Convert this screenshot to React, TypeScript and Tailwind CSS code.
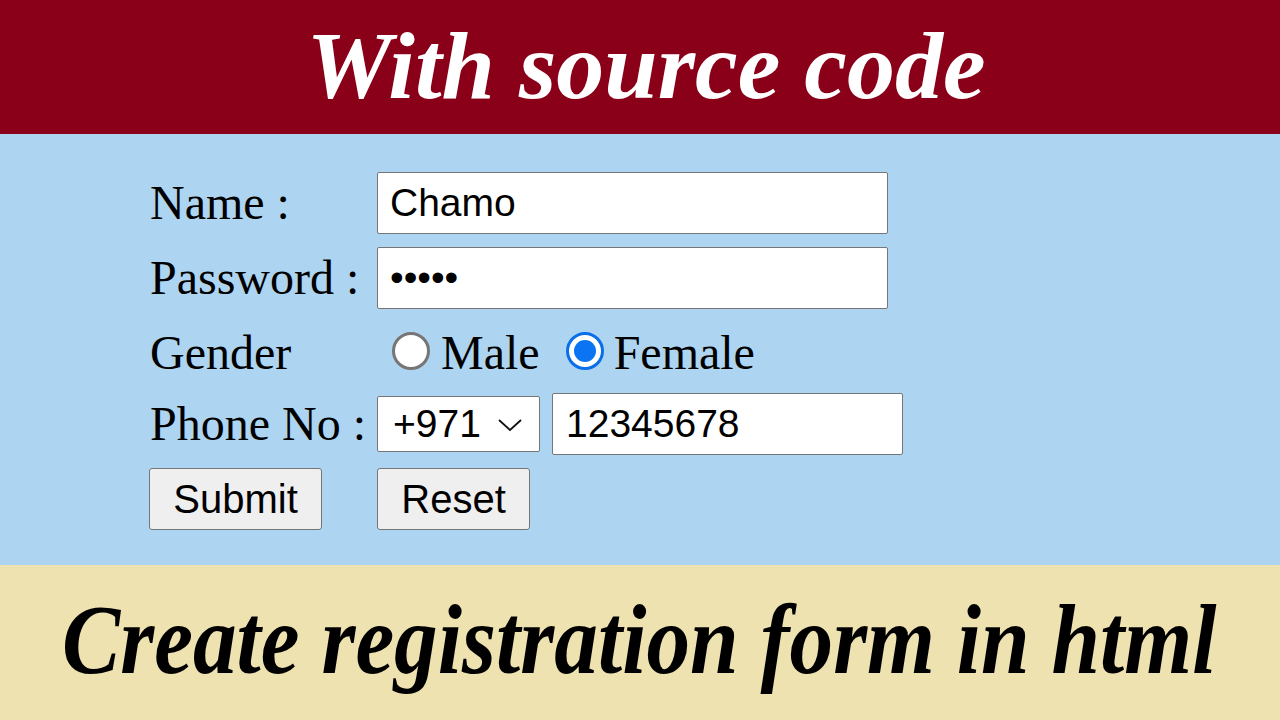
export default function App() {
  return (
    <div className="w-[1280px] h-[720px] flex flex-col overflow-hidden">
      {/* top banner */}
      <div className="h-[134px] bg-[#8a0019] flex items-center justify-center">
        <h1 className="font-['Liberation_Serif',serif] italic font-bold text-white text-[96px] leading-none scale-x-[1.0] ml-[12px] mt-[-2px] whitespace-nowrap">
          With source code
        </h1>
      </div>

      {/* form */}
      <div className="flex-1 bg-[#add4f0] pl-[149px] pt-[38px]">
        <div className="grid grid-cols-[228px_auto] gap-y-[13px] font-['Liberation_Serif',serif] text-[48px] text-black">
          <label className="h-[62px] flex items-center pl-px">Name :</label>
          <input
            defaultValue="Chamo"
            className="w-[511px] h-[62px] bg-white border border-[#767676] rounded-[2px] px-[12px] font-['Liberation_Sans',sans-serif] text-[39px] outline-none"
          />

          <label className="h-[62px] flex items-center pl-px">Password :</label>
          <input
            type="password"
            defaultValue="Chamo"
            className="w-[511px] h-[62px] bg-white border border-[#767676] rounded-[2px] px-[12px] font-['Liberation_Sans',sans-serif] text-[39px] outline-none"
          />

          <label className="h-[58px] flex items-center pl-px pt-[3px]">Gender</label>
          <div className="h-[58px] flex items-center pl-[15px]">
            <span className="w-[38px] h-[38px] rounded-full border-[3px] border-[#767676] bg-white" />
            <span className="ml-[11px] pt-[3px]">Male</span>
            <span className="ml-[26px] w-[38px] h-[38px] rounded-full border-[3px] border-[#0a6fe8] bg-white flex items-center justify-center">
              <span className="w-[22px] h-[22px] rounded-full bg-[#0a74f2]" />
            </span>
            <span className="ml-[10px] pt-[3px]">Female</span>
          </div>

          <label className="h-[62px] flex items-center pl-px">Phone No :</label>
          <div className="h-[62px] flex items-center">
            <div className="w-[163px] h-[56px] bg-white border border-[#767676] rounded-[2px] flex items-center pl-[15px] font-['Liberation_Sans',sans-serif] text-[39px]">
              <span>+971</span>
              <svg className="ml-[16px] mt-[2px]" width="26" height="16" viewBox="0 0 26 16" fill="none">
                <path d="M2 3 L13 13 L24 3" stroke="#111" strokeWidth="1.8" />
              </svg>
            </div>
            <input
              defaultValue="12345678"
              className="ml-[12px] w-[351px] h-[62px] bg-white border border-[#767676] rounded-[2px] px-[13px] font-['Liberation_Sans',sans-serif] text-[39px] outline-none"
            />
          </div>

          <div className="h-[62px] flex items-center">
            <button className="w-[173px] h-[62px] bg-[#efefef] border border-[#767676] rounded-[3px] font-['Liberation_Sans',sans-serif] text-[40px]">
              Submit
            </button>
          </div>
          <div className="h-[62px] flex items-center">
            <button className="w-[153px] h-[62px] bg-[#efefef] border border-[#767676] rounded-[3px] font-['Liberation_Sans',sans-serif] text-[40px]">
              Reset
            </button>
          </div>
        </div>
      </div>

      {/* bottom banner */}
      <div className="h-[155px] bg-[#eee2b0] flex items-center justify-center">
        <h2 className="font-['Liberation_Serif',serif] italic font-bold text-black text-[100px] leading-none scale-x-[0.873] whitespace-nowrap mt-[-6px] ml-[-2px]">
          Create registration form in html
        </h2>
      </div>
    </div>
  );
}
